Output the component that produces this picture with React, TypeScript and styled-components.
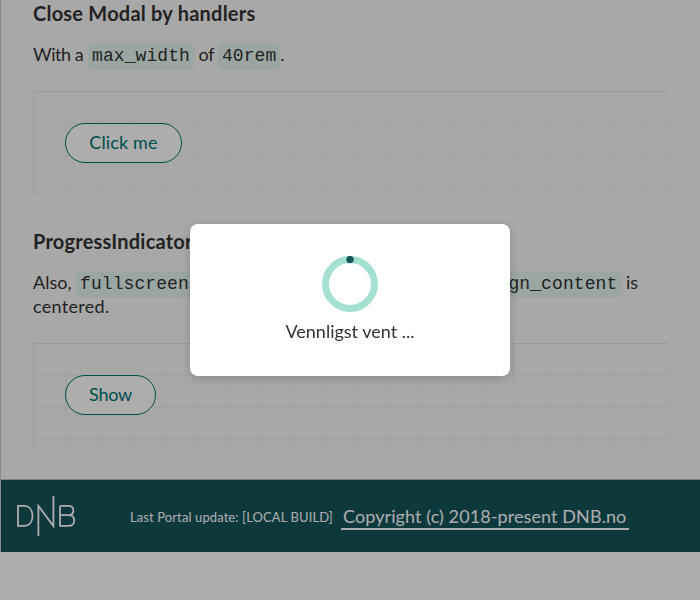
import React from "react";
import styled, { createGlobalStyle } from "styled-components";

const GlobalStyle = createGlobalStyle`
  * { box-sizing: border-box; }
  body {
    margin: 0;
    background: #fff;
    color: #333;
    font: 18px/24px Lato, "Liberation Sans", sans-serif;
    overflow: hidden;
  }
`;

const Page = styled.div`
  height: 552px;
  border-left: 1px solid #cdcdcd;
  background: #f8f8f8;
  display: flex;
  flex-direction: column;
`;

const Content = styled.main`
  height: 480px;
  padding: 0 32px;
  border-bottom: 1px solid #b8c2c0;
`;

const Heading = styled.h3<{ $top?: number }>`
  margin: ${(p) => p.$top ?? 0}px 0 0;
  font-size: 20px;
  line-height: 26px;
  font-weight: 700;
  letter-spacing: 0.22px;
  white-space: nowrap;
`;

const Paragraph = styled.p`
  margin: 16px 0 25px;
`;

const Line = styled.span`
  display: flex;
  align-items: baseline;
  height: 24px;
  white-space: nowrap;
`;

const Words = styled.span<{ $width?: number; $spacing?: number }>`
  flex: none;
  width: ${(p) => (p.$width ? `${p.$width}px` : "auto")};
  letter-spacing: ${(p) => p.$spacing ?? 0}px;
`;

const Code = styled.code`
  flex: none;
  padding: 3px 4px 4px;
  border-radius: 4px;
  background: #e5f5f0;
  font: 18px/20px "Liberation Mono", monospace;
  letter-spacing: 0.08px;
`;

const Example = styled.div`
  height: 104px;
  padding: 32px;
  box-shadow: inset 0 0 0 1px rgba(0, 0, 0, 0.035);
  background-image:
    linear-gradient(rgba(0, 0, 0, 0.025) 1px, transparent 1px),
    linear-gradient(90deg, rgba(0, 0, 0, 0.025) 1px, transparent 1px),
    linear-gradient(rgba(0, 0, 0, 0.018) 1px, transparent 1px),
    linear-gradient(90deg, rgba(0, 0, 0, 0.018) 1px, transparent 1px);
  background-size: 32px 32px, 32px 32px, 8px 8px, 8px 8px;
`;

const Button = styled.button<{ $width: number; $spacing?: number }>`
  display: block;
  width: ${(p) => p.$width}px;
  height: 40px;
  padding: 0 0 2px;
  border: 1px solid #007272;
  border-radius: 20px;
  background: #fff;
  color: #007272;
  font: 18px/24px Lato, "Liberation Sans", sans-serif;
  letter-spacing: ${(p) => p.$spacing ?? 0}px;
`;

const Footer = styled.footer`
  height: 72px;
  display: flex;
  align-items: center;
  padding-left: 15px;
  background: #14555a;
  color: #fff;
  white-space: nowrap;
`;

const Logo = styled.svg`
  flex: none;
  display: block;
  width: 62px;
  height: 42px;
`;

const Build = styled.span`
  width: 211px;
  margin-left: 52px;
  padding-top: 2px;
  font-size: 13px;
  letter-spacing: 0.1px;
`;

const Copyright = styled.a`
  width: 288px;
  height: 26px;
  padding-left: 2px;
  border-bottom: 2px solid #fff;
  letter-spacing: 0.09px;
  margin-top: 2px;
`;

const Overlay = styled.div`
  position: fixed;
  inset: 0;
  display: flex;
  align-items: center;
  justify-content: center;
  background: rgba(0, 0, 0, 0.32);
`;

const Dialog = styled.div`
  width: 320px;
  height: 152px;
  padding-top: 32px;
  display: flex;
  flex-direction: column;
  align-items: center;
  gap: 7px;
  border-radius: 8px;
  background: #fff;
  box-shadow: 0 2px 10px rgba(0, 0, 0, 0.2);
`;

const Spinner = styled.svg`
  flex: none;
  width: 56px;
  height: 56px;
`;

function DnbLogo() {
  return (
    <Logo viewBox="0 0 62 42" fill="none" stroke="#fff" strokeWidth="1.8">
      <path d="M2 10.9h5.5c5.8 0 9 4.2 9 10s-3.2 10-9 10H2Z" />
      <path d="M22.4 41V11l15 20V1" />
      <path d="M44 10.9h8c3.5 0 5.4 1.8 5.4 4.7s-2 4.6-5.1 4.6H44m8.3 0c3.9 0 5.9 2 5.9 5.2 0 3.5-2.2 5.5-5.9 5.5H44v-20" />
    </Logo>
  );
}

export default function App() {
  return (
    <>
      <GlobalStyle />
      <Page>
        <Content>
          <Heading>Close Modal by handlers</Heading>
          <Paragraph>
            <Line>
              <Words $width={55} $spacing={-0.45}>With a</Words>
              <Code>max_width</Code>
              <Words $width={24} $spacing={-0.1}>&nbsp;of</Words>
              <Code>40rem</Code>
              <Words>.</Words>
            </Line>
          </Paragraph>
          <Example>
            <Button $width={117} $spacing={0.15}>Click me</Button>
          </Example>
          <Heading $top={33}>ProgressIndicator</Heading>
          <Paragraph>
            <Line>
              <Words $width={43}>Also,</Words>
              <Code>fullscreen</Code>
              <Words $width={279}>&nbsp;is set to false and the</Words>
              <Code>align_content</Code>
              <Words>&nbsp;is</Words>
            </Line>
            <Line>
              <Words $spacing={0.3}>centered.</Words>
            </Line>
          </Paragraph>
          <Example>
            <Button $width={91} $spacing={-0.25}>Show</Button>
          </Example>
        </Content>
        <Footer>
          <DnbLogo />
          <Build>Last Portal update: [LOCAL BUILD]</Build>
          <Copyright>Copyright (c) 2018-present DNB.no</Copyright>
        </Footer>
      </Page>
      <Overlay>
        <Dialog>
          <Spinner viewBox="0 0 56 56">
            <circle cx="28" cy="28" r="24.5" fill="none" stroke="#a5e1d2" strokeWidth="7" />
            <circle cx="28" cy="3.6" r="3.7" fill="#14555a" />
          </Spinner>
          <span>Vennligst vent ...</span>
        </Dialog>
      </Overlay>
    </>
  );
}
